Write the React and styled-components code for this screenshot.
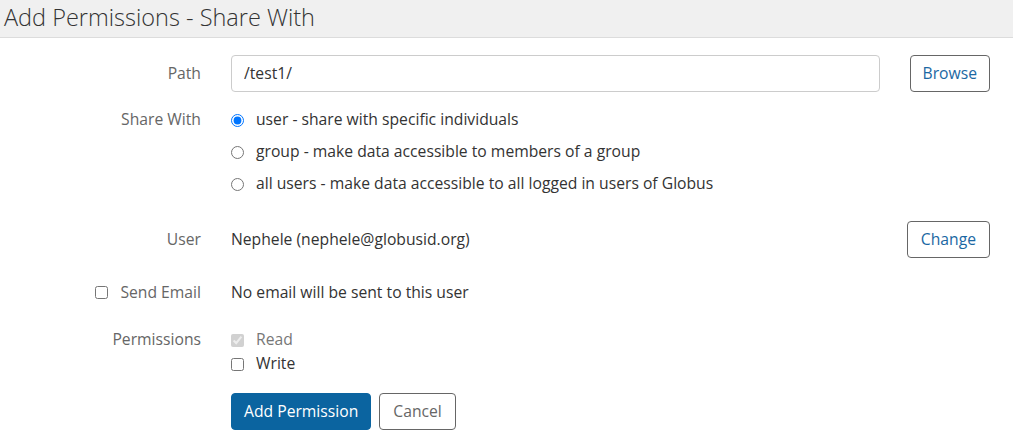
import React, { useState } from "react";
import styled, { createGlobalStyle } from "styled-components";

const Global = createGlobalStyle`
  html, body { margin: 0; padding: 0; background: #fff; }
  body { font-family: "Open Sans", Lato, sans-serif; color: #333; }
`;

const Header = styled.div`
  height: 38px;
  background: #f0f0f0;
  border-bottom: 1px solid #dcdcdc;
  box-sizing: border-box;
  padding: 0 0 3px 4px;
  display: flex;
  align-items: center;
`;

const Title = styled.h1`
  margin: 0;
  font-size: 23.5px;
  font-weight: 300;
  color: #333;
`;

const Form = styled.form`
  padding: 17px 23px 0 0;
  display: flex;
  flex-direction: column;
`;

const Row = styled.div`
  display: flex;
  align-items: ${(p) => (p.$top ? "flex-start" : "center")};
  margin-top: ${(p) => p.$mt || 0}px;
`;

const Label = styled.label`
  width: 201px;
  height: ${(p) => p.$lh || 24}px;
  flex-shrink: 0;
  box-sizing: border-box;
  padding-bottom: 2px;
  color: #666;
  font-size: 15.7px;
  display: flex;
  justify-content: flex-end;
  align-items: center;
  gap: 12px;
`;

const Content = styled.div`
  flex: 1;
  margin-left: 30px;
  display: flex;
  flex-direction: column;
  gap: ${(p) => p.$gap || 0}px;
  font-size: 15.7px;
  color: #333;
`;

const TextInput = styled.input`
  height: 37px;
  box-sizing: border-box;
  border: 1px solid #ccc;
  border-radius: 4px;
  padding: 0 12px 2px;
  font-family: inherit;
  font-size: 15.7px;
  color: #333;
  width: 649px;
`;

const Plain = styled.div`
  height: 24px;
  box-sizing: border-box;
  padding-bottom: 2px;
  display: flex;
  align-items: center;
`;

const Option = styled.label`
  display: flex;
  align-items: center;
  height: 24px;
  gap: 12px;
  color: ${(p) => (p.$muted ? "#777" : "#333")};
  font-size: 15.7px;
`;

const OptionText = styled.span`
  line-height: 20px;
  margin-bottom: 2px;
`;

const Radio = styled.input.attrs({ type: "radio" })`
  margin: 0;
  width: 13px;
  height: 13px;
`;

const Check = styled.input.attrs({ type: "checkbox" })`
  margin: 0;
  width: 13px;
  height: 13px;
`;

const Button = styled.button`
  height: 37px;
  box-sizing: border-box;
  border-radius: 4px;
  padding: 0 ${(p) => p.$px || 12}px 2px;
  font-family: inherit;
  font-size: 15.7px;
  background: ${(p) => (p.$primary ? "#0b64a0" : "#fff")};
  color: ${(p) => (p.$primary ? "#fff" : p.$link ? "#1b68a3" : "#666")};
  border: 1px solid ${(p) => (p.$primary ? "#0b64a0" : "#666")};
  flex-shrink: 0;
  cursor: pointer;
`;

const Actions = styled.div`
  display: flex;
  gap: 8px;
  margin-top: 17px;
`;

export default function App() {
  const [share, setShare] = useState("user");
  return (
    <>
      <Global />
      <Header>
        <Title>Add Permissions - Share With</Title>
      </Header>
      <Form onSubmit={(e) => e.preventDefault()}>
        <Row>
          <Label $lh={37}>Path</Label>
          <Content>
            <TextInput defaultValue="/test1/" />
          </Content>
          <Button type="button" $link $px={12}>Browse</Button>
        </Row>
        <Row $top $mt={16}>
          <Label>Share With</Label>
          <Content $gap={8}>
            <Option>
              <Radio name="share" checked={share === "user"} onChange={() => setShare("user")} />
              <OptionText>user - share with specific individuals</OptionText>
            </Option>
            <Option>
              <Radio name="share" checked={share === "group"} onChange={() => setShare("group")} />
              <OptionText>group - make data accessible to members of a group</OptionText>
            </Option>
            <Option>
              <Radio name="share" checked={share === "all"} onChange={() => setShare("all")} />
              <OptionText>all users - make data accessible to all logged in users of Globus</OptionText>
            </Option>
          </Content>
        </Row>
        <Row $mt={25}>
          <Label $lh={37}>User</Label>
          <Content>
            <Plain>Nephele (nephele@globusid.org)</Plain>
          </Content>
          <Button type="button" $link $px={13}>Change</Button>
        </Row>
        <Row $mt={23}>
          <Label>
            <Check />
            Send Email
          </Label>
          <Content>
            <Plain>No email will be sent to this user</Plain>
          </Content>
        </Row>
        <Row $top $mt={23}>
          <Label>Permissions</Label>
          <Content>
            <Option $muted>
              <Check checked disabled readOnly />
              <OptionText>Read</OptionText>
            </Option>
            <Option>
              <Check />
              <OptionText>Write</OptionText>
            </Option>
            <Actions>
              <Button type="submit" $primary>Add Permission</Button>
              <Button type="button" $px={13}>Cancel</Button>
            </Actions>
          </Content>
        </Row>
      </Form>
    </>
  );
}
